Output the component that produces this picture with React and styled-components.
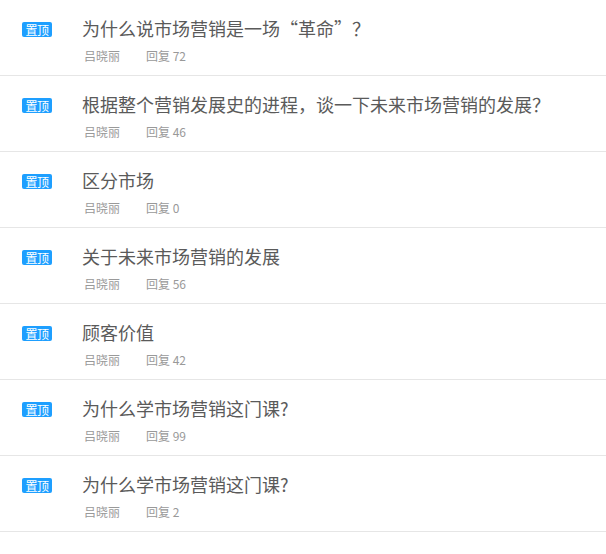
import React from "react";
import styled, { createGlobalStyle } from "styled-components";

const Global = createGlobalStyle`
  html, body { margin: 0; padding: 0; background: #fff; }
  body { font-family: "Noto Sans CJK SC", "Liberation Sans", sans-serif; }
`;

const List = styled.ul`
  list-style: none;
  margin: 0;
  padding: 0;
`;

const Row = styled.li`
  display: flex;
  height: 75px;
  border-bottom: 1px solid #e6e6e6;
  box-sizing: content-box;
`;

const BadgeCol = styled.div`
  display: flex;
  align-items: flex-start;
  width: 82px;
  flex: none;
  padding: 22px 0 0 22px;
  box-sizing: border-box;
`;

const Badge = styled.span`
  display: flex;
  align-items: center;
  justify-content: center;
  width: 30px;
  height: 15px;
  background: #1e9fff;
  color: #fff;
  font-size: 12px;
  line-height: 15px;
  border-radius: 2px;
  letter-spacing: -0.5px;
`;

const Body = styled.div`
  display: flex;
  flex-direction: column;
  padding-top: 15px;
`;

const Title = styled.a`
  font-size: 18px;
  line-height: 26px;
  height: 26px;
  color: #5a5a5a;
  text-decoration: none;
  white-space: nowrap;
`;

const Meta = styled.div`
  display: flex;
  margin-top: 5px;
  padding-left: 2px;
  font-size: 12px;
  line-height: 20px;
  color: #999;
`;

const Author = styled.span`
  width: 62px;
`;

const Reply = styled.span``;

const items = [
  { title: "为什么说市场营销是一场“革命”？", replies: 72 },
  { title: "根据整个营销发展史的进程，谈一下未来市场营销的发展？", replies: 46 },
  { title: "区分市场", replies: 0 },
  { title: "关于未来市场营销的发展", replies: 56 },
  { title: "顾客价值", replies: 42 },
  { title: "为什么学市场营销这门课?", replies: 99 },
  { title: "为什么学市场营销这门课?", replies: 2 },
];

export default function App() {
  return (
    <>
      <Global />
      <List>
        {items.map((it, i) => (
          <Row key={i}>
            <BadgeCol>
              <Badge>置顶</Badge>
            </BadgeCol>
            <Body>
              <Title href="#">{it.title}</Title>
              <Meta>
                <Author>吕晓丽</Author>
                <Reply>回复 {it.replies}</Reply>
              </Meta>
            </Body>
          </Row>
        ))}
      </List>
    </>
  );
}
